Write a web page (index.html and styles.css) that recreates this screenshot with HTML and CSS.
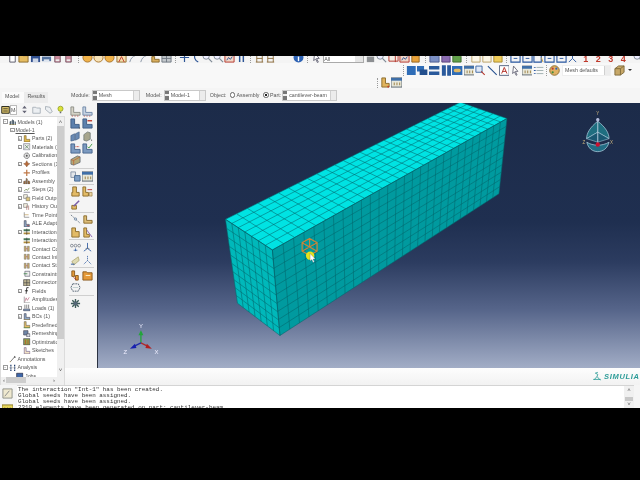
FILE: index.html
```html
<!DOCTYPE html>
<html lang="en">
<head>
<meta charset="utf-8">
<title>Abaqus/CAE - Mesh module</title>
<link rel="stylesheet" href="styles.css">
</head>
<body>
<svg class="sprite" aria-hidden="true">
  <symbol id="doc" viewBox="0 0 12 12"><path d="M3 1h6v10H3z" fill="#fff" stroke="#556"/></symbol>
  <symbol id="folder" viewBox="0 0 12 12"><path d="M1 3h4l1 1h5v7H1z" fill="#e6bd62" stroke="#8a6a2a"/></symbol>
  <symbol id="save" viewBox="0 0 12 12"><path d="M1 1h10v10H1z" fill="#2f4f8f"/><path d="M3 7h6v4H3z" fill="#cdd6e6"/></symbol>
  <symbol id="print" viewBox="0 0 12 12"><path d="M1 5h10v5H1z" fill="#55739f"/><path d="M3 8h6v3H3z" fill="#dfe6f0"/></symbol>
  <symbol id="pink" viewBox="0 0 12 12"><path d="M3 1h6v10H3z" fill="#c98a9a" stroke="#7a5a68"/><path d="M4 8h4v2H4z" fill="#eee"/></symbol>
  <symbol id="orb" viewBox="0 0 12 12"><circle cx="6" cy="6" r="5" fill="#f0b24a" stroke="#a8742a"/></symbol>
  <symbol id="orb2" viewBox="0 0 12 12"><circle cx="6" cy="6" r="5" fill="#f7e3b8" stroke="#a8742a"/></symbol>
  <symbol id="arrowbox" viewBox="0 0 12 12"><path d="M1 2h10v9H1z" fill="#f5dfae" stroke="#96702e"/><path d="M3 11l3-6 3 6" fill="none" stroke="#c0392b"/></symbol>
  <symbol id="hook" viewBox="0 0 12 12"><path d="M3 11c1-4 3-6 6-7" fill="none" stroke="#8894a4"/></symbol>
  <symbol id="tanbox" viewBox="0 0 12 12"><path d="M2 5h3v3h5v3H2z" fill="#d9ae5f" stroke="#8a6a2a"/></symbol>
  <symbol id="greybox" viewBox="0 0 12 12"><path d="M1 4h10v7H1z" fill="#c3c8cc" stroke="#6d7680"/><path d="M1 7h10M6 4v7" stroke="#6d7680"/></symbol>
  <symbol id="cross" viewBox="0 0 12 12"><path d="M6 1v10M1 6h10" stroke="#2d5596" stroke-width="1.3"/></symbol>
  <symbol id="curve" viewBox="0 0 12 12"><path d="M9 11C5 9 4 5 6 2" fill="none" stroke="#2d5596" stroke-width="1.3"/></symbol>
  <symbol id="mag" viewBox="0 0 12 12"><circle cx="4.5" cy="4.5" r="3.4" fill="#eef" stroke="#7f8a96"/><path d="M7 7l4 4" stroke="#7f8a96" stroke-width="1.3"/></symbol>
  <symbol id="redbox" viewBox="0 0 12 12"><path d="M1 3h10v8H1z" fill="#f1d7c8" stroke="#b5342a"/><path d="M3 9l2-3 2 2 2-3" fill="none" stroke="#2d5596"/></symbol>
  <symbol id="updown" viewBox="0 0 12 12"><path d="M4 1v10M8 1v10" stroke="#2d5596" stroke-width="1.6"/></symbol>
  <symbol id="brown" viewBox="0 0 12 12"><path d="M2 3h8M3 3v8M9 3v8M3 7h6M2 11h8" stroke="#8a6a3a" fill="none"/></symbol>
  <symbol id="info" viewBox="0 0 12 12"><circle cx="6" cy="6" r="5.4" fill="#2d62b4"/><path d="M6 5v5" stroke="#fff" stroke-width="1.5"/></symbol>
  <symbol id="cursor" viewBox="0 0 12 12"><path d="M4 1l5 6H6l2 4-1 .5-2-4-2 2z" fill="#fff" stroke="#667"/></symbol>
  <symbol id="tiny" viewBox="0 0 12 12"><path d="M2 5h8v6H2z" fill="#8c8f92"/></symbol>
  <symbol id="redpart" viewBox="0 0 12 12"><path d="M1 3h10v7H1z" fill="#f4ece4" stroke="#b5342a"/><path d="M8 3v8" stroke="#b5342a"/></symbol>
  <symbol id="orange" viewBox="0 0 12 12"><path d="M2 4h8v7H2z" fill="#e8a23a" stroke="#94641c"/></symbol>
  <symbol id="bluecube" viewBox="0 0 12 12"><path d="M1 3h8l2 2v6H1z" fill="#7b8fc4" stroke="#4a5a90"/></symbol>
  <symbol id="purplecube" viewBox="0 0 12 12"><path d="M2 3h7l2 2v6H2z" fill="#8a6cb0" stroke="#553f7a"/></symbol>
  <symbol id="greencube" viewBox="0 0 12 12"><path d="M2 3h7l2 2v6H2z" fill="#62a04a" stroke="#3c6c2c"/></symbol>
  <symbol id="whitecube" viewBox="0 0 12 12"><path d="M2 3h7l2 2v6H2z" fill="#fbf6e6" stroke="#b9a064"/></symbol>
  <symbol id="yellowcube" viewBox="0 0 12 12"><path d="M2 3h7l2 2v6H2z" fill="#eecb5a" stroke="#a8892c"/></symbol>
  <symbol id="frame" viewBox="0 0 12 12"><path d="M1 1h10v10H1z" fill="none" stroke="#27559f" stroke-width="1.2"/><path d="M4 7h4" stroke="#27559f"/></symbol>
  <symbol id="frametan" viewBox="0 0 12 12"><path d="M1 1h8v10H1z" fill="none" stroke="#27559f" stroke-width="1.2"/><path d="M9 6l2 5" stroke="#c49a3a"/></symbol>
  <symbol id="triad" viewBox="0 0 12 12"><path d="M6 1v6M6 7l-4 4M6 7l4 4" stroke="#27559f" fill="none"/></symbol>
  <symbol id="grid" viewBox="0 0 12 12"><path d="M1 1h10v10H1z" fill="#2f6db7"/></symbol>
  <symbol id="stack" viewBox="0 0 12 12"><path d="M0 1h8v6H0z" fill="#2f6db7"/><path d="M3 5h9v6H3z" fill="#234f8d"/></symbol>
  <symbol id="bars" viewBox="0 0 12 12"><path d="M0 1h12v4H0zM0 7h12v4H0z" fill="#2a5a9c"/></symbol>
  <symbol id="vbars" viewBox="0 0 12 12"><path d="M1 0h4.5v12H1zM7 0h4.5v12H7z" fill="#2a5a9c"/></symbol>
  <symbol id="pill" viewBox="0 0 12 12"><path d="M0 1h12v10H0z" fill="#2f6db7"/><rect x="2" y="4" width="8" height="4" rx="2" fill="#e2b964"/></symbol>
  <symbol id="table" viewBox="0 0 12 12"><path d="M0 1h12v10H0z" fill="#e8e8da" stroke="#55606c"/><path d="M0 1h12v3H0z" fill="#3f6fa8"/><path d="M3 6h1v3H3zM6 6h1v3H6zM9 6h1v3H9z" fill="#987a3c"/></symbol>
  <symbol id="magblue" viewBox="0 0 12 12"><path d="M1 1h7v7H1z" fill="#dfe8f6" stroke="#36629f"/><path d="M7 7l4 4" stroke="#b5342a" stroke-width="1.2"/></symbol>
  <symbol id="diag" viewBox="0 0 12 12"><path d="M1 1l10 10" stroke="#244f8e" stroke-width="1.2"/></symbol>
  <symbol id="textbox" viewBox="0 0 12 12"><path d="M.5.5h11v11H.5z" fill="#fff" stroke="#4a5a78"/><path d="M3 9.5L6 2.5l3 7M4 7h4" fill="none" stroke="#b5342a" stroke-width="1.1"/></symbol>
  <symbol id="list" viewBox="0 0 12 12"><path d="M1 2h2v1H1zM1 5.500h2v1H1zM1 9h2v1H1z" fill="#27559f"/><path d="M4 2.500h8M4 6h8M4 9.500h8" stroke="#9aa"/></symbol>
  <symbol id="palette" viewBox="0 0 12 12"><circle cx="6" cy="6" r="5.200" fill="#e0b265" stroke="#8a6a2a"/><circle cx="4" cy="4" r="1.200" fill="#c0392b"/><circle cx="8" cy="4" r="1.200" fill="#2d62b4"/><circle cx="4" cy="8" r="1.200" fill="#3c8a3c"/></symbol>
  <symbol id="tancube" viewBox="0 0 12 12"><path d="M1 4l4-3h6v7l-4 3H1z" fill="#c7a868" stroke="#7f6a3a"/><path d="M1 4h6v7M7 4l4-3" fill="none" stroke="#7f6a3a"/></symbol>
  <symbol id="tanred" viewBox="0 0 12 12"><path d="M2 1h4v6h4v4H2z" fill="#e0b35c" stroke="#8a6a2a"/><circle cx="9" cy="10.500" r="1" fill="#c0392b"/></symbol>

  <symbol id="seedtan" viewBox="0 0 12 12"><path d="M1 1h3v6h7v3H1z" fill="#d5d3c6" stroke="#8b8d86"/><path d="M2 11h1M5 11h1M8 11h1" stroke="#b5342a"/></symbol>
  <symbol id="seedblue" viewBox="0 0 12 12"><path d="M1 1h3v6h7v3H1z" fill="#c5d2e2" stroke="#6d87a6"/><path d="M2 11h1M5 11h1M8 11h1" stroke="#b5342a"/></symbol>
  <symbol id="lblue" viewBox="0 0 12 12"><path d="M1 1h4v6h5v4H1z" fill="#5c80ad" stroke="#3e5c84"/><path d="M10 11h1" stroke="#222"/></symbol>
  <symbol id="lbluered" viewBox="0 0 12 12"><path d="M1 1h4v6h6v4H1z" fill="#5c80ad" stroke="#3e5c84"/><path d="M6 3h5" stroke="#c0392b" stroke-width="1.500"/></symbol>
  <symbol id="blue3d" viewBox="0 0 12 12"><path d="M1 5l4-2v7l-4 1zM6 3l4-2v7l-4 2z" fill="#6a8ab3" stroke="#3e5c84" stroke-width=".7"/></symbol>
  <symbol id="tan3d" viewBox="0 0 12 12"><path d="M2 4l4-3 3 1v7l-4 2-3-1z" fill="#a7a58d" stroke="#606a6a" stroke-width=".7"/><path d="M10 10h1" stroke="#222"/></symbol>
  <symbol id="lblueword" viewBox="0 0 12 12"><path d="M1 1h4v6h6v4H1z" fill="#7c9ac0" stroke="#46658c"/><path d="M6 4h4" stroke="#c0392b" stroke-dasharray="1 .6"/></symbol>
  <symbol id="lcheck" viewBox="0 0 12 12"><path d="M1 1h4v6h6v4H1z" fill="#7c9ac0" stroke="#46658c"/><path d="M6 4l1.500 1.500L11 1" fill="none" stroke="#3d9a3d"/></symbol>
  <symbol id="cubemesh" viewBox="0 0 12 12"><path d="M1 5l7-4 3 1v6l-7 3-3-1z" fill="#b4a878" stroke="#5c6470" stroke-width=".8"/><path d="M1 5l3 1v5M4 6l7-4" fill="none" stroke="#c05a2c" stroke-width=".7"/></symbol>
  <symbol id="sheets" viewBox="0 0 12 12"><path d="M1 1h5v6H1z" fill="#e3e6ea" stroke="#8895a6"/><path d="M5 5h6v6H5z" fill="#7f9fc6" stroke="#47688f"/></symbol>
  <symbol id="ltan" viewBox="0 0 12 12"><path d="M3 1h4v6h3v4H2V7h1z" fill="#e3bb66" stroke="#8a6a2a"/></symbol>
  <symbol id="ltanred" viewBox="0 0 12 12"><path d="M1 1h3v6h3v4H1z" fill="#e3bb66" stroke="#8a6a2a"/><path d="M6 4h5" stroke="#b5342a"/><path d="M8 7h3v4H8z" fill="#ead4a2" stroke="#8a6a2a" stroke-width=".6"/></symbol>
  <symbol id="pen" viewBox="0 0 12 12"><path d="M2 7h5v4H2z" fill="#e3bb66" stroke="#8a6a2a"/><path d="M4 8l6-6" stroke="#7a5fa8" stroke-width="1.600"/></symbol>
  <symbol id="dotline" viewBox="0 0 12 12"><path d="M1 1l10 9" stroke="#60707f" stroke-dasharray="1.500 1"/><circle cx="6" cy="5.500" r="1.300" fill="#cfd6dd" stroke="#47688f" stroke-width=".6"/></symbol>
  <symbol id="ltan2" viewBox="0 0 12 12"><path d="M2 2h3v5h6v3H2z" fill="#ddbd78" stroke="#8a6a2a"/></symbol>
  <symbol id="ltan3" viewBox="0 0 12 12"><path d="M2 1h4v4h4v6H2z" fill="#e3bb66" stroke="#8a6a2a"/></symbol>
  <symbol id="lpurple" viewBox="0 0 12 12"><path d="M2 1h3v7h3v3H2z" fill="#e3bb66" stroke="#8a6a2a"/><path d="M5 3l6 8" stroke="#8a5fb0"/></symbol>
  <symbol id="omo" viewBox="0 0 12 12"><circle cx="2" cy="4" r="1.500" fill="none" stroke="#5c6470" stroke-width=".7"/><circle cx="6" cy="4" r="1.500" fill="none" stroke="#5c6470" stroke-width=".7"/><circle cx="10" cy="4" r="1.500" fill="none" stroke="#5c6470" stroke-width=".7"/><path d="M6 7v3M4 9h4" stroke="#27559f" stroke-width=".8"/></symbol>
  <symbol id="axis" viewBox="0 0 12 12"><path d="M6 1v6M6 7l-4 3M6 7l4 3" stroke="#27559f" fill="none" stroke-width=".9"/><path d="M4 7h4" stroke="#5c6470" stroke-width=".7"/></symbol>
  <symbol id="sheetpen" viewBox="0 0 12 12"><path d="M2 7l7-5 1 4-6 5z" fill="#dedab2" stroke="#a49a5e" stroke-width=".7"/><path d="M1 10h4" stroke="#27559f"/></symbol>
  <symbol id="axis2" viewBox="0 0 12 12"><path d="M6 1v5M6 6l-4 4M6 6l4 4" stroke="#27559f" fill="none" stroke-width=".8" stroke-dasharray="1.500 .7"/></symbol>
  <symbol id="tanstep" viewBox="0 0 12 12"><path d="M2 1h3v6H2z" fill="#e59a3a" stroke="#8a5a1e"/><path d="M6 6h3v5H6z" fill="#e59a3a" stroke="#8a5a1e"/><path d="M4 8l3 3" stroke="#b5342a"/></symbol>
  <symbol id="folderor" viewBox="0 0 12 12"><path d="M1 2h4l1 1h5v8H1z" fill="#e59a3a" stroke="#8a5a1e"/><path d="M4 6h5" stroke="#fff2cc"/></symbol>
  <symbol id="ring" viewBox="0 0 12 12"><path d="M3 2h6l2 4-2 4H3L1 6z" fill="none" stroke="#3f5062" stroke-width=".9" stroke-dasharray="2 .8"/><path d="M3 6h6" stroke="#8aa" stroke-width=".5"/></symbol>
  <symbol id="gear" viewBox="0 0 12 12"><path d="M6 1v10M1 6h10M2.500 2.500l7 7M9.500 2.500l-7 7" stroke="#3c5a58" stroke-width="1.500"/><circle cx="6" cy="6" r="2" fill="#567"/></symbol>
  <symbol id="models" viewBox="0 0 12 12"><path d="M1 11V6l3-2v7zM5 11V2l3 2v7zM9 11V5l2 1v5z" fill="#50606e"/><path d="M0 11h12" stroke="#c0a040"/></symbol>
  <symbol id="tparts" viewBox="0 0 12 12"><path d="M2 1h3v6h6v4H2z" fill="#e3bb4c" stroke="#7a6024"/></symbol>
  <symbol id="tmat" viewBox="0 0 12 12"><path d="M1 1h10v10H1z" fill="#e9eaea" stroke="#778"/><path d="M3 3l6 6M9 3l-6 6" stroke="#4e7a4e"/></symbol>
  <symbol id="tcal" viewBox="0 0 12 12"><circle cx="6" cy="6" r="4.400" fill="#ddd" stroke="#444" stroke-width="1.300" stroke-dasharray="1.500 .8"/><circle cx="6" cy="6" r="1.500" fill="#555"/></symbol>
  <symbol id="tsec" viewBox="0 0 12 12"><path d="M6 1l2 4 3 1-3 2-2 3-2-3-3-2 3-1z" fill="#b76a3a" stroke="#6d4020" stroke-width=".6"/></symbol>
  <symbol id="tprof" viewBox="0 0 12 12"><path d="M5 1h2v4h4v2H7v4H5V7H1V5h4z" fill="#c07a4a"/></symbol>
  <symbol id="tasm" viewBox="0 0 12 12"><path d="M1 11V7l3-1v5zM5 11V2l2 1v8zM8 11V6l3 1v4z" fill="#9b6a3c" stroke="#4e4a48" stroke-width=".6"/></symbol>
  <symbol id="tstep" viewBox="0 0 12 12"><path d="M1 10h10" stroke="#556"/><path d="M2 8l3-3 2 2 3-4" fill="none" stroke="#5a7a3a" stroke-width="1.100"/></symbol>
  <symbol id="tfield" viewBox="0 0 12 12"><path d="M1 1h6v6H1z" fill="#f2efe0" stroke="#777"/><path d="M5 5h6v6H5z" fill="#d9c27a" stroke="#777"/></symbol>
  <symbol id="thist" viewBox="0 0 12 12"><path d="M1 1h6v6H1z" fill="#f2efe0" stroke="#777"/><path d="M6 4v7M9 4v7" stroke="#a0605a"/></symbol>
  <symbol id="ttime" viewBox="0 0 12 12"><path d="M2 2v8h8" fill="none" stroke="#666"/><path d="M2 6h7" stroke="#b9924a"/></symbol>
  <symbol id="tale" viewBox="0 0 12 12"><path d="M2 1h3v6h5v4H2z" fill="#8ea8c6" stroke="#445"/><path d="M6 9h4" stroke="#b5342a"/></symbol>
  <symbol id="tint" viewBox="0 0 12 12"><path d="M1 2h10v3H1z" fill="#4a7a5a"/><path d="M1 7h10v3H1z" fill="#b08c3c"/><path d="M6 1v10" stroke="#333"/></symbol>
  <symbol id="tcon" viewBox="0 0 12 12"><path d="M2 2h3v8H2zM7 2h3v8H7z" fill="#c7a868" stroke="#666" stroke-width=".7"/><path d="M5 6h2" stroke="#b5342a"/></symbol>
  <symbol id="tconst" viewBox="0 0 12 12"><path d="M3 2h8v8H3z" fill="#eee" stroke="#556"/><path d="M1 6h6" stroke="#2d7a3a" stroke-width="1.200"/></symbol>
  <symbol id="tconn" viewBox="0 0 12 12"><path d="M1 1h10v10H1z" fill="#b9b08e" stroke="#444"/><path d="M1 6h10M6 1v10" stroke="#444"/></symbol>
  <symbol id="tf" viewBox="0 0 12 12"><path d="M9 1H6L5 11M3 6h5" fill="none" stroke="#222" stroke-width="1.300"/></symbol>
  <symbol id="tamp" viewBox="0 0 12 12"><path d="M2 1v10h9" fill="none" stroke="#777"/><path d="M3 9l2-6 2 4 3-5" fill="none" stroke="#b5607a"/></symbol>
  <symbol id="tload" viewBox="0 0 12 12"><path d="M1 8h10v3H1z" fill="#8ea8c6" stroke="#445"/><path d="M3 1v6M6 1v6M9 1v6" stroke="#444"/></symbol>
  <symbol id="tbc" viewBox="0 0 12 12"><path d="M2 1h3v6h6v4H2z" fill="#8ea8c6" stroke="#445"/><path d="M1 11h10" stroke="#c09a3a"/></symbol>
  <symbol id="tpre" viewBox="0 0 12 12"><path d="M2 1h3v6h6v4H2z" fill="#e3bb66" stroke="#665"/><path d="M1 11h10" stroke="#3d8a3d"/></symbol>
  <symbol id="trem" viewBox="0 0 12 12"><path d="M1 1h7v7H1z" fill="#6f87a8" stroke="#445"/><path d="M6 6h5v5H6z" fill="#d8dde6" stroke="#445"/></symbol>
  <symbol id="topt" viewBox="0 0 12 12"><path d="M1 1h10v10H1z" fill="#8fa24e" stroke="#445"/><path d="M4 3v7M8 3v7" stroke="#c2572c" stroke-width="1.200"/></symbol>
  <symbol id="tsk" viewBox="0 0 12 12"><path d="M2 1h3v6h6v4H2z" fill="#f2e3c4" stroke="#6d5a8c"/></symbol>
  <symbol id="tann" viewBox="0 0 12 12"><path d="M2 11l7-8" stroke="#333"/><path d="M9 1l2 3-3 0z" fill="#222"/><path d="M1 11h2" stroke="#c49a3a"/></symbol>
  <symbol id="tan2" viewBox="0 0 12 12"><path d="M3 1v10M9 1v10" stroke="#24406e" stroke-width="2" stroke-dasharray="2 .8"/><path d="M0 6h12" stroke="#999" stroke-width=".7"/></symbol>
  <symbol id="job" viewBox="0 0 12 12"><path d="M1 2h10v8H1z" fill="#3d66a8" stroke="#223"/></symbol>
  <symbol id="msg" viewBox="0 0 12 12"><path d="M1 1h10v10H1z" fill="#efe9cf" stroke="#8b8d86"/><path d="M3 9l5-6" stroke="#888"/></symbol>
  <symbol id="warn" viewBox="0 0 12 12"><path d="M0 1h12v10H0z" fill="#e6d55a" stroke="#8a7a2a"/><path d="M3 4v3M6 4v3M9 4v3" stroke="#444"/></symbol>
  <symbol id="updn" viewBox="0 0 12 12"><path d="M6 1l3 3.500H3zM6 11L3 7.500h6z" fill="#667"/></symbol>
  <symbol id="fld" viewBox="0 0 12 12"><path d="M1 3h4l1 1h5v7H1z" fill="#eceff2" stroke="#9aa3ac"/></symbol>
  <symbol id="tag" viewBox="0 0 12 12"><path d="M2 2l6 1 3 6-3 2-6-5z" fill="#eceff2" stroke="#9aa3ac"/></symbol>
  <symbol id="bulb" viewBox="0 0 12 12"><circle cx="6" cy="5" r="3.400" fill="#dde23a" stroke="#8b9a22"/><path d="M5 9h2v2H5z" fill="#667"/></symbol>
  <symbol id="modbox" viewBox="0 0 12 12"><path d="M1 2h10v9H1z" fill="#d9c069" stroke="#2c2c20" stroke-width="1.300"/><path d="M3 5h6M3 8h6" stroke="#2c2c20"/></symbol>
</svg>

<div class="app">
  <header class="top">
    <div class="row-a">
      <div class="g g-a1"><svg class="ic"><use href="#doc"/></svg><svg class="ic"><use href="#folder"/></svg><svg class="ic"><use href="#save"/></svg><svg class="ic"><use href="#print"/></svg><svg class="ic"><use href="#pink"/></svg><svg class="ic"><use href="#pink"/></svg></div>
      <i class="sep"></i>
      <div class="g"><svg class="ic"><use href="#orb"/></svg><svg class="ic"><use href="#orb2"/></svg><svg class="ic"><use href="#orb"/></svg><svg class="ic"><use href="#arrowbox"/></svg><svg class="ic"><use href="#hook"/></svg><svg class="ic"><use href="#hook"/></svg><svg class="ic"><use href="#tanbox"/></svg><svg class="ic"><use href="#greybox"/></svg></div>
      <i class="sep"></i>
      <div class="g"><svg class="ic"><use href="#cross"/></svg><svg class="ic"><use href="#curve"/></svg><svg class="ic"><use href="#mag"/></svg><svg class="ic"><use href="#mag"/></svg><svg class="ic"><use href="#redbox"/></svg><svg class="ic"><use href="#updown"/></svg></div>
      <i class="sep"></i>
      <div class="g"><svg class="ic"><use href="#brown"/></svg><svg class="ic"><use href="#brown"/></svg></div>
      <div class="g g-info"><svg class="ic"><use href="#info"/></svg></div>
      <i class="sep"></i>
      <div class="g"><svg class="ic"><use href="#cursor"/></svg></div>
      <div class="top-combo"><span>All</span><b></b></div>
      <div class="g"><svg class="ic"><use href="#tiny"/></svg><svg class="ic"><use href="#mag"/></svg><svg class="ic"><use href="#redpart"/></svg><svg class="ic"><use href="#redbox"/></svg><svg class="ic"><use href="#orange"/></svg></div>
      <i class="sep"></i>
      <div class="g"><svg class="ic"><use href="#bluecube"/></svg><svg class="ic"><use href="#purplecube"/></svg><svg class="ic"><use href="#greencube"/></svg></div>
      <i class="sep"></i>
      <div class="g"><svg class="ic"><use href="#whitecube"/></svg><svg class="ic"><use href="#whitecube"/></svg><svg class="ic"><use href="#yellowcube"/></svg></div>
      <i class="sep"></i>
      <div class="g"><svg class="ic"><use href="#frame"/></svg><svg class="ic"><use href="#frame"/></svg><svg class="ic"><use href="#frametan"/></svg><svg class="ic"><use href="#frame"/></svg><svg class="ic"><use href="#frame"/></svg><svg class="ic"><use href="#triad"/></svg></div>
      <div class="nums"><span>1</span><span>2</span><span>3</span><span>4</span></div>
      <svg class="ic ic-end"><use href="#mag"/></svg>
    </div>
    <div class="row-b">
      <i class="sep"></i>
      <div class="g g-b"><svg class="ic"><use href="#grid"/></svg><svg class="ic"><use href="#stack"/></svg><svg class="ic"><use href="#bars"/></svg><svg class="ic"><use href="#vbars"/></svg><svg class="ic"><use href="#pill"/></svg><svg class="ic"><use href="#table"/></svg><svg class="ic"><use href="#magblue"/></svg><svg class="ic"><use href="#diag"/></svg><svg class="ic"><use href="#textbox"/></svg><svg class="ic"><use href="#cursor"/></svg><svg class="ic"><use href="#table"/></svg><svg class="ic"><use href="#list"/></svg></div>
      <i class="sep"></i>
      <svg class="ic"><use href="#palette"/></svg>
      <div class="combo combo-defaults"><span>Mesh defaults</span><b></b></div>
      <svg class="ic ic-cube"><use href="#tancube"/></svg>
      <em class="caret"></em>
    </div>
    <div class="row-c">
      <i class="sep"></i>
      <svg class="ic"><use href="#tanred"/></svg><svg class="ic"><use href="#table"/></svg>
    </div>
  </header>

  <main class="main">
    <aside class="side">
      <nav class="tabs"><span class="tab tab-on">Model</span><span class="tab">Results</span></nav>
      <div class="mini">
        <svg class="ic"><use href="#modbox"/></svg>
        <div class="mini-combo"><span>Mo</span><b></b></div>
        <svg class="ic ic-m"><use href="#updn"/></svg>
        <svg class="ic ic-m"><use href="#fld"/></svg>
        <svg class="ic ic-m"><use href="#tag"/></svg>
        <svg class="ic ic-m"><use href="#bulb"/></svg>
      </div>
      <div class="tree-wrap">
        <div class="tree-col">
          <ul class="tree">
            <li class="l0"><i class="box">−</i><svg><use href="#models"/></svg>Models (1)</li>
            <li class="l1"><i class="box">−</i><u>Model-1</u></li>
            <li class="l2"><i class="box">+</i><svg><use href="#tparts"/></svg>Parts (2)</li>
            <li class="l2"><i class="box">+</i><svg><use href="#tmat"/></svg>Materials (1)</li>
            <li class="l3"><svg><use href="#tcal"/></svg>Calibrations</li>
            <li class="l2"><i class="box">+</i><svg><use href="#tsec"/></svg>Sections (1)</li>
            <li class="l3"><svg><use href="#tprof"/></svg>Profiles</li>
            <li class="l2"><i class="box">+</i><svg><use href="#tasm"/></svg>Assembly</li>
            <li class="l2"><i class="box">+</i><svg><use href="#tstep"/></svg>Steps (2)</li>
            <li class="l2"><i class="box">+</i><svg><use href="#tfield"/></svg>Field Output</li>
            <li class="l2"><i class="box">+</i><svg><use href="#thist"/></svg>History Out</li>
            <li class="l3"><svg><use href="#ttime"/></svg>Time Points</li>
            <li class="l3"><svg><use href="#tale"/></svg>ALE Adaptive</li>
            <li class="l2"><i class="box">+</i><svg><use href="#tint"/></svg>Interactions</li>
            <li class="l3"><svg><use href="#tint"/></svg>Interaction</li>
            <li class="l3"><svg><use href="#tcon"/></svg>Contact Con</li>
            <li class="l3"><svg><use href="#tcon"/></svg>Contact Ini</li>
            <li class="l3"><svg><use href="#tcon"/></svg>Contact Sta</li>
            <li class="l3"><svg><use href="#tconst"/></svg>Constraints</li>
            <li class="l3"><svg><use href="#tconn"/></svg>Connectors</li>
            <li class="l2"><i class="box">+</i><svg><use href="#tf"/></svg>Fields</li>
            <li class="l3"><svg><use href="#tamp"/></svg>Amplitudes</li>
            <li class="l2"><i class="box">+</i><svg><use href="#tload"/></svg>Loads (1)</li>
            <li class="l2"><i class="box">+</i><svg><use href="#tbc"/></svg>BCs (1)</li>
            <li class="l3"><svg><use href="#tpre"/></svg>Predefined</li>
            <li class="l3"><svg><use href="#trem"/></svg>Remeshing</li>
            <li class="l3"><svg><use href="#topt"/></svg>Optimization</li>
            <li class="l3"><svg><use href="#tsk"/></svg>Sketches</li>
            <li class="l0 l0-plain"><svg><use href="#tann"/></svg>Annotations</li>
            <li class="l0"><i class="box">−</i><svg><use href="#tan2"/></svg>Analysis</li>
            <li class="l-job"><svg><use href="#job"/></svg>Jobs</li>
          </ul>
          <div class="hscroll"><span class="ar">‹</span><span class="hthumb"></span><span class="ar">›</span></div>
        </div>
        <div class="vscroll"><span class="ar">˄</span><span class="vthumb"></span><span class="ar">˅</span></div>
      </div>
    </aside>

    <section class="work">
      <div class="context">
        <label class="lab">Module:</label>
        <div class="combo combo-module"><s></s><span>Mesh</span><b></b></div>
        <label class="lab">Model:</label>
        <div class="combo combo-model"><s></s><span>Model-1</span><b></b></div>
        <label class="lab lab-object">Object:</label>
        <i class="radio"></i><label class="lab">Assembly</label>
        <i class="radio radio-on"></i><label class="lab">Part:</label>
        <div class="combo combo-part"><s></s><span>cantilever-beam</span><b></b></div>
      </div>
      <div class="mid">
        <div class="toolbox">
          <div class="tools">
            <svg class="ic"><use href="#seedtan"/></svg><svg class="ic"><use href="#seedblue"/></svg>
            <svg class="ic"><use href="#lblue"/></svg><svg class="ic"><use href="#lbluered"/></svg>
            <svg class="ic"><use href="#blue3d"/></svg><svg class="ic"><use href="#tan3d"/></svg>
            <svg class="ic"><use href="#lblueword"/></svg><svg class="ic"><use href="#lcheck"/></svg>
            <svg class="ic"><use href="#cubemesh"/></svg>
          </div>
          <hr class="rule">
          <div class="tools"><svg class="ic"><use href="#sheets"/></svg><svg class="ic"><use href="#table"/></svg></div>
          <hr class="rule">
          <div class="tools">
            <svg class="ic"><use href="#ltan"/></svg><svg class="ic"><use href="#ltanred"/></svg>
            <svg class="ic"><use href="#pen"/></svg>
          </div>
          <hr class="rule">
          <div class="tools">
            <svg class="ic"><use href="#dotline"/></svg><svg class="ic"><use href="#ltan2"/></svg>
            <svg class="ic"><use href="#ltan3"/></svg><svg class="ic"><use href="#lpurple"/></svg>
          </div>
          <hr class="rule">
          <div class="tools">
            <svg class="ic"><use href="#omo"/></svg><svg class="ic"><use href="#axis"/></svg>
            <svg class="ic"><use href="#sheetpen"/></svg><svg class="ic"><use href="#axis2"/></svg>
          </div>
          <hr class="rule">
          <div class="tools">
            <svg class="ic"><use href="#tanstep"/></svg><svg class="ic"><use href="#folderor"/></svg>
            <svg class="ic"><use href="#ring"/></svg>
          </div>
          <hr class="rule">
          <div class="tools"><svg class="ic"><use href="#gear"/></svg></div>
        </div>
        <div class="canvas">
          <svg class="scene" viewBox="97 103 543 265">
            <polygon class="f-top" points="224.700,219.300 460,102 506.700,118.300 271.700,250"/>
            <polygon class="f-left" points="224.700,219.300 271.700,250 279.300,335.700 236.700,303.300"/>
            <polygon class="f-right" points="271.700,250 506.700,118.300 498.700,193.700 279.300,335.700"/>
            <path id="mesh-lines" class="mesh"/>
            <g class="seedmark">
              <path d="M309 238.500l7.500 4.200v8.500l-7.500 4.200-7.500-4.200v-8.500zM309 247l0-8.500M309 247l-7.500 4.200M309 247l7.500 4.200M309 247l-7.500-4.200M309 247l7.500-4.200"/>
            </g>
            <circle class="spot" cx="309.500" cy="255.700" r="4.200"/>
            <path class="pointer" d="M309.500 253.500v7.600l1.700-1.500 1.300 2.900 1.200-.6-1.300-2.800h2.300z"/>
            <g class="compass">
              <path class="leaf" d="M597.700 121C590 127 586.500 133 586.500 138.500L597.700 132l11.300 6.500C609 133 605.500 127 597.700 121z"/>
              <path class="leaf2" d="M586.500 138.500L597.700 132l11.300 6.500-11.300 3.500z"/>
              <path class="crescent" d="M586.700 142c3 2 7 3 11 3s8-1 11.300-3c-1.500 6-6 9.500-11.300 9.500S588 148 586.700 142z"/>
              <path class="spine" d="M597.700 118v26"/>
              <circle class="knob" cx="597.700" cy="119.500" r="1.700"/>
              <circle class="redball" cx="597.700" cy="144.400" r="2.200"/>
              <text class="c-lab" x="597.700" y="115">Y</text>
              <text class="c-lab" x="583.700" y="143.500">Z</text>
              <text class="c-lab" x="611.500" y="143.500">X</text>
            </g>
            <g class="triad">
              <path class="ax ax-y" d="M140 343v-8"/><path class="head-y" d="M137.500 335.500l2.500-5 2.500 5z"/>
              <path class="ax ax-x" d="M140 343l7 3.500"/><path class="head-x" d="M146 344l5 5-6.500-.7z"/>
              <path class="ax ax-z" d="M140 343l-7 3.500"/><path class="head-z" d="M134 344l-5 5 6.500-.7z"/>
              <text class="t-lab" x="140" y="328.500">Y</text>
              <text class="t-lab" x="155.500" y="354">X</text>
              <text class="t-lab" x="124.500" y="354">Z</text>
            </g>
          </svg>
        </div>
      </div>
      <div class="strip">
        <svg class="ds" viewBox="0 0 12 12"><path d="M7 1l-3 1 3 1.500-1 2.500-3.500 4M6 6l4 4.500M1.500 9.500l9 0"/></svg>
        <span class="simulia">SIMULIA</span>
      </div>
    </section>
  </main>

  <footer class="log">
    <div class="log-icons"><svg class="ic"><use href="#msg"/></svg><svg class="ic"><use href="#warn"/></svg></div>
    <pre class="log-text">The interaction "Int-1" has been created.
Global seeds have been assigned.
Global seeds have been assigned.
2310 elements have been generated on part: cantilever-beam</pre>
    <div class="log-scroll"><span class="ar">˄</span><span class="lthumb"></span><span class="ar">˅</span></div>
  </footer>
</div>
<script src="mesh.js"></script>
</body>
</html>
```

FILE: styles.css
```css
* { box-sizing: border-box; }
html, body { margin: 0; height: 480px; overflow: hidden; background: #000; }
body { font-family: "Liberation Sans", Arial, sans-serif; font-size: 5.3px; color: #555; }
.sprite { display: none; }
.app {
  margin-top: 56px;
  width: 640px;
  height: 352px;
  display: flex;
  flex-direction: column;
  background: #f5f5f5;
  overflow: hidden;
  filter: blur(.3px);
}
.ic { width: 11px; height: 11px; flex: none; display: block; }
.g { display: flex; flex: none; }
.sep { flex: none; width: 1px; height: 10px; margin: 0 3px; border-left: 1px dotted #9a9a9a; }

/* Top toolbars */
.top { flex: none; height: 32px; background: #f8f8f8; }
.row-a { height: 7px; display: flex; align-items: flex-end; padding-left: 7px; background: #f4f4f4; overflow: hidden; }
.row-a .ic { margin-right: .3px; }
.g-info { margin-left: 16px; }
.top-combo { flex: none; width: 41px; height: 12px; margin: 0 1px; background: #fff; border: 1px solid #aaa; display: flex; justify-content: space-between; align-items: flex-end; }
.top-combo b { width: 8px; height: 11px; background: #e4e4e4; }
.nums { display: flex; flex: none; gap: 7.500px; padding: 0 5px; color: #c0392b; font-size: 9px; font-weight: bold; line-height: 7px; }
.ic-end { margin-left: 2px; }
.row-b { height: 14px; display: flex; align-items: center; justify-content: flex-end; padding-right: 8px; }
.row-b .ic { margin-right: 1px; }
.row-b .g-b .ic { width: 10.600px; margin-right: 1px; }
.g-b { margin-right: -1px; }
.row-b .sep { height: 11px; margin: 0 2px; }
.row-c { height: 11px; display: flex; align-items: center; padding-left: 375px; }
.row-c .sep { margin: 0 2px; }
.caret { width: 0; height: 0; margin-left: 2px; border: 2px solid transparent; border-top-color: #333; border-bottom: 0; }
.ic-cube { margin-left: 3px; }

/* Combos */
.combo { flex: none; height: 11px; display: flex; align-items: center; background: #fff; border: 1px solid #c9c9c9; overflow: hidden; }
.combo span { flex: 1; padding-left: 2px; white-space: nowrap; overflow: hidden; }
.combo b { flex: none; width: 6px; height: 100%; background: #ececec; border-left: 1px solid #d0d0d0; position: relative; }
.combo s { flex: none; width: 4px; height: 100%; background: linear-gradient(#777 0 30%, #eee 30% 60%, #777 60%); }
.combo-defaults { width: 49px; margin-left: 1px; border-color: #eee; }
.combo-module { width: 48px; margin: 0 6px 0 2px; }
.combo-model { width: 42px; margin: 0 4px 0 2px; }
.combo-part { width: 55px; margin-left: 1px; }

/* Main */
.main { flex: none; height: 297px; display: flex; }
.side { flex: none; width: 65px; display: flex; flex-direction: column; }
.tabs { height: 15px; display: flex; align-items: flex-end; padding-left: 2px; }
.tab { padding: 0 3px 3px; height: 11px; line-height: 9px; color: #555; }
.tab-on { background: #fbfbfb; padding-right: 5px; }
.tab:not(.tab-on) { background: #ececec; }
.mini { height: 13px; display: flex; align-items: center; background: #f5f5f5; padding-left: 1px; gap: 3px; }
.mini .ic { width: 9px; height: 9px; }
.mini-combo { width: 11px; height: 10px; margin-left: -3px; display: flex; background: #fff; border: 1px solid #bbb; overflow: hidden; line-height: 8px; }
.mini-combo b { width: 4px; margin-left: auto; background: #e6e6e6; }
.tree-wrap { flex: 1; min-height: 0; display: flex; border: 1px solid #dcdcdc; border-bottom: 0; background: #fff; }
.tree-col { flex: 1; min-width: 0; display: flex; flex-direction: column; }
.tree { flex: 1; min-height: 0; margin: 0; padding: 0; list-style: none; overflow: hidden; }
.tree li { height: 8.470px; line-height: 8.470px; display: flex; align-items: center; white-space: nowrap; position: relative; top: .5px; color: #555; }
.tree svg { width: 7.500px; height: 7.500px; flex: none; margin-right: 1.500px; }
.box { flex: none; width: 4.500px; height: 4.500px; margin-right: 1px; border: .6px solid #9a9a9a; font-style: normal; font-size: 4px; line-height: 3px; text-align: center; color: #555; }
.l0 { padding-left: 2px; }
.l0-plain { padding-left: 7.500px; }
.l1 { padding-left: 9px; }
.l2 { padding-left: 16.500px; }
.l3 { padding-left: 22px; }
.l-job { padding-left: 15px; }
.hscroll { flex: none; height: 8px; display: flex; align-items: center; justify-content: space-between; background: #f0f0f0; border-bottom: 2px solid #eee; padding: 0 2px; }
.hthumb { width: 20px; height: 6px; background: #cdcdcd; margin-right: auto; margin-left: 1px; }
.ar { font-size: 6px; line-height: 6px; color: #555; text-align: center; flex: none; }
.vscroll { flex: none; width: 7px; display: flex; flex-direction: column; align-items: center; padding: 2px 0 12px; background: #f0f0f0; }
.vthumb { width: 7px; height: 213px; margin: 1px 0 28px; background: #cdcdcd; }

/* Context bar and work area */
.work { flex: 1; min-width: 0; display: flex; flex-direction: column; }
.context { flex: none; height: 15px; display: flex; align-items: center; padding: 0 0 1px 6px; color: #555; }
.lab { flex: none; }
.lab-object { margin-right: 3px; }
.radio { flex: none; width: 5.500px; height: 5.500px; margin: 0 1.500px 0 0; border: .7px solid #666; border-radius: 50%; background: #fff; }
.radio-on { background: radial-gradient(circle, #222 0 45%, #fff 50%); margin-left: 3.500px; }
.mid { flex: none; height: 265px; display: flex; }
.toolbox { flex: none; width: 32px; padding: 2px 3px 0 4px; background: #f4f4f4; }
.tools { display: grid; grid-template-columns: 12.500px 12.500px; grid-auto-rows: 12.450px; align-items: center; justify-items: center; }
.rule { margin: 1px 0; border: 0; border-top: 1px solid #cfcfcf; height: 0; }
.canvas { flex: 1; min-width: 0; background: linear-gradient(#1c2b49 0%, #1f2f50 45%, #2c3c60 60%, #56658a 78%, #a2adc6 100%); border-left: 1px solid #2a3140; }
.scene { display: block; width: 100%; height: 100%; }
.f-top { fill: #00e3e3; }
.f-left { fill: #00b8ba; }
.f-right { fill: #009a9f; }
.mesh { fill: none; stroke: #03666c; stroke-width: .55; }
.seedmark path { fill: none; stroke: #c9863a; stroke-width: 1.200; }
.spot { fill: #e6e21e; }
.pointer { fill: #fff; stroke: #445; stroke-width: .25; }
.leaf { fill: #1f6e80; stroke: #b6d4e4; stroke-width: .7; }
.leaf2 { fill: #1a5872; stroke: #b6d4e4; stroke-width: .5; }
.crescent { fill: #226c84; stroke: #b6d4e4; stroke-width: .7; }
.spine { stroke: #c4d6e6; stroke-width: .9; }
.knob { fill: #b4bcdc; }
.redball { fill: #c8102e; }
.c-lab { fill: #c9b27c; font-size: 4.500px; text-anchor: middle; }
.ax { stroke-width: 1.300; fill: none; }
.ax-y { stroke: #22a53a; }
.ax-x { stroke: #b02a2a; }
.ax-z { stroke: #1f2aa8; }
.head-y { fill: #22a53a; }
.head-x { fill: #b02020; }
.head-z { fill: #1820b0; }
.t-lab { fill: #eef; font-size: 6px; text-anchor: middle; }
.strip { flex: none; height: 17px; display: flex; align-items: center; justify-content: flex-end; background: linear-gradient(#fdfdfd, #f2f2f2); overflow: hidden; padding-right: 0; }
.ds { width: 10px; height: 11px; flex: none; fill: none; stroke: #2c9c98; stroke-width: 1; }
.simulia { flex: none; width: 36px; margin-left: 2px; font-size: 7.500px; font-weight: bold; font-style: italic; letter-spacing: .7px; color: #2c9c98; white-space: nowrap; overflow: hidden; }

/* Log */
.log { flex: none; height: 23px; display: flex; background: #f5f5f5; }
.log-icons { flex: none; width: 17px; padding: 3px 0 0 2px; display: flex; flex-direction: column; gap: 5px; }
.log-text { flex: none; width: 607px; margin: 0; height: 23px; padding: 1px 0 0 1px; background: #fff; border-top: 1px solid #d4d4d4; font-family: "Liberation Mono", "Courier New", monospace; font-size: 5.900px; line-height: 5.900px; color: #333; overflow: hidden; }
.log-scroll { flex: none; width: 10px; display: flex; flex-direction: column; align-items: center; background: #f0f0f0; border-top: 1px solid #d4d4d4; padding-top: 1px; }
.lthumb { width: 8px; height: 4px; margin: 4px 0 0; background: #c8c8c8; }
```

FILE: mesh.js
```js
// Draws the element grid over the three visible faces of the beam.
(function () {
  function homography(q) {
    var x0 = q[0][0], y0 = q[0][1], x1 = q[1][0], y1 = q[1][1];
    var x2 = q[2][0], y2 = q[2][1], x3 = q[3][0], y3 = q[3][1];
    var dx1 = x1 - x2, dx2 = x3 - x2, sx = x0 - x1 + x2 - x3;
    var dy1 = y1 - y2, dy2 = y3 - y2, sy = y0 - y1 + y2 - y3;
    var den = dx1 * dy2 - dx2 * dy1;
    var g = (sx * dy2 - dx2 * sy) / den;
    var h = (dx1 * sy - sx * dy1) / den;
    var a = x1 - x0 + g * x1, b = x3 - x0 + h * x3;
    var d = y1 - y0 + g * y1, e = y3 - y0 + h * y3;
    return function (u, v) {
      var w = g * u + h * v + 1;
      return ((a * u + b * v + x0) / w).toFixed(2) + " " + ((d * u + e * v + y0) / w).toFixed(2);
    };
  }
  function grid(q, nu, nv) {
    var p = homography(q), out = "", i;
    for (i = 0; i <= nu; i++) out += "M" + p(i / nu, 0) + "L" + p(i / nu, 1);
    for (i = 0; i <= nv; i++) out += "M" + p(0, i / nv) + "L" + p(1, i / nv);
    return out;
  }
  var A = [224.7, 219.3], B = [271.7, 250], C = [506.7, 118.3], D = [460, 102];
  var E = [279.3, 335.7], F = [498.7, 193.7], G = [236.7, 303.3];
  document.getElementById("mesh-lines").setAttribute("d",
    grid([A, D, C, B], 28, 7) + grid([B, C, F, E], 28, 10) + grid([A, B, E, G], 7, 10));
})();
```
